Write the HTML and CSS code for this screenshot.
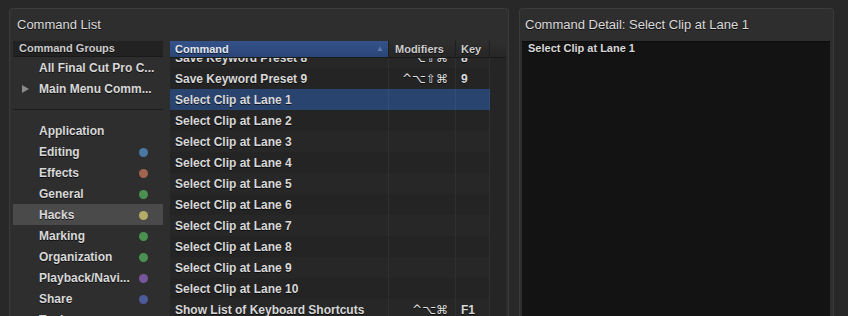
FILE: index.html
```html
<!DOCTYPE html>
<html>
  <head>
    <meta http-equiv="Content-Type" content="text/html; charset=utf-8"/>
    <link rel="stylesheet" href="styles.css">
  </head>
  <body>
    <div class="window">
      <div class="panel list-panel">
        <div class="panel-title">Command List</div>
        <div class="list-body">
          <div class="groups">
            <div class="groups-head">Command Groups</div>
            <div class="group top">All Final Cut Pro C...</div>
            <div class="group top"><span class="disclosure"></span>Main Menu Comm...</div>
            <div class="group-sep"></div>
            <div class="group">Application</div>
            <div class="group">Editing<span class="dot blue"></span></div>
            <div class="group">Effects<span class="dot rust"></span></div>
            <div class="group">General<span class="dot green"></span></div>
            <div class="group selected">Hacks<span class="dot yellow"></span></div>
            <div class="group">Marking<span class="dot green"></span></div>
            <div class="group">Organization<span class="dot green"></span></div>
            <div class="group">Playback/Navi...<span class="dot purple"></span></div>
            <div class="group">Share<span class="dot indigo"></span></div>
            <div class="group">Tools<span class="dot olive"></span></div>
          </div>
          <div class="commands">
            <div class="table-head">
              <div class="th col-cmd sorted">Command<span class="sort-arrow">&#9650;</span></div>
              <div class="th col-mod">Modifiers</div>
              <div class="th col-key">Key</div>
              <div class="th col-bar"></div>
            </div>
            <div class="table-body">
              <div class="rows">
                <div class="row"><div class="col-cmd">Save Keyword Preset 8</div><div class="col-mod keys">^&#8997;&#8679;&#8984;</div><div class="col-key">8</div></div>
                <div class="row"><div class="col-cmd">Save Keyword Preset 9</div><div class="col-mod keys">^&#8997;&#8679;&#8984;</div><div class="col-key">9</div></div>
                <div class="row selected"><div class="col-cmd">Select Clip at Lane 1</div><div class="col-mod"></div><div class="col-key"></div></div>
                <div class="row"><div class="col-cmd">Select Clip at Lane 2</div><div class="col-mod"></div><div class="col-key"></div></div>
                <div class="row"><div class="col-cmd">Select Clip at Lane 3</div><div class="col-mod"></div><div class="col-key"></div></div>
                <div class="row"><div class="col-cmd">Select Clip at Lane 4</div><div class="col-mod"></div><div class="col-key"></div></div>
                <div class="row"><div class="col-cmd">Select Clip at Lane 5</div><div class="col-mod"></div><div class="col-key"></div></div>
                <div class="row"><div class="col-cmd">Select Clip at Lane 6</div><div class="col-mod"></div><div class="col-key"></div></div>
                <div class="row"><div class="col-cmd">Select Clip at Lane 7</div><div class="col-mod"></div><div class="col-key"></div></div>
                <div class="row"><div class="col-cmd">Select Clip at Lane 8</div><div class="col-mod"></div><div class="col-key"></div></div>
                <div class="row"><div class="col-cmd">Select Clip at Lane 9</div><div class="col-mod"></div><div class="col-key"></div></div>
                <div class="row"><div class="col-cmd">Select Clip at Lane 10</div><div class="col-mod"></div><div class="col-key"></div></div>
                <div class="row"><div class="col-cmd">Show List of Keyboard Shortcuts</div><div class="col-mod keys">^&#8997;&#8984;</div><div class="col-key">F1</div></div>
              </div>
            </div>
          </div>
        </div>
      </div>
      <div class="panel detail-panel">
        <div class="panel-title">Command Detail: Select Clip at Lane 1</div>
        <div class="detail-text">Select Clip at Lane 1</div>
      </div>
    </div>
  </body>
</html>
```

FILE: styles.css
```css
html, body {
  margin: 0px;
  padding: 0px;
  height: 316px;
  overflow: hidden;
  background: #282828;
}

body {
  font-family: "Liberation Sans", Arial, sans-serif;
  color: #d8d8d8;
  text-shadow: 0px 1px 0px rgba(0, 0, 0, 0.7);
}

.window {
  display: flex;
  gap: 10px;
  padding: 8px 0px 0px 9px;
}

.panel {
  height: 340px;
  background: #2e2e2e;
  border: 1px solid #3b3b3b;
  border-bottom: none;
  border-radius: 4px 4px 0px 0px;
  display: flex;
  flex-direction: column;
}

.list-panel {
  width: 498px;
}

.detail-panel {
  width: 313px;
}

.panel-title {
  height: 32px;
  line-height: 32px;
  padding-left: 7px;
  font-size: 13px;
  color: #dadada;
  flex: none;
  white-space: nowrap;
}

.detail-panel .panel-title {
  padding-left: 5px;
}

/* command list */

.list-body {
  display: flex;
  gap: 7px;
  padding: 0px 2px 0px 3px;
  flex: 1;
}

.groups {
  width: 150px;
  flex: none;
}

.groups-head {
  height: 15px;
  line-height: 15px;
  background: #222222;
  border-bottom: 1px solid #1a1a1a;
  padding-left: 6px;
  font-size: 11px;
  font-weight: bold;
  color: #cccccc;
  white-space: nowrap;
}

.group {
  height: 21px;
  box-sizing: border-box;
  padding: 2px 15px 0px 26px;
  line-height: 19px;
  font-size: 12px;
  font-weight: bold;
  color: #d8d8d8;
  display: flex;
  justify-content: space-between;
  align-items: center;
  white-space: nowrap;
}

.group.top:first-of-type {
  margin-top: 1px;
}

.group.selected {
  background: #4a4a4a;
}

.disclosure {
  position: relative;
}

.disclosure::before {
  content: "";
  position: absolute;
  left: -17px;
  top: -5px;
  border-left: 7px solid #8a8a8a;
  border-top: 4px solid transparent;
  border-bottom: 4px solid transparent;
}

.group-sep {
  height: 1px;
  margin: 10px 0px 10px 0px;
  background: #1c1c1c;
}

.dot {
  width: 9px;
  height: 9px;
  border-radius: 50%;
  flex: none;
}

.dot.blue { background: #4a78a4; }
.dot.rust { background: #a0644f; }
.dot.green { background: #4a9050; }
.dot.yellow { background: #b4ac66; }
.dot.purple { background: #76579c; }
.dot.indigo { background: #4d5a9c; }
.dot.olive { background: #9a9458; }

/* command table */

.commands {
  width: 336px;
  flex: none;
  display: flex;
  flex-direction: column;
  background: #252525;
}

.table-head {
  display: flex;
  height: 16px;
  background: linear-gradient(#2f2f2f, #262626);
  border-bottom: 1px solid #1a1a1a;
  flex: none;
  position: relative;
  z-index: 1;
}

.th {
  line-height: 16px;
  font-size: 11px;
  font-weight: bold;
  color: #cccccc;
  border-right: 1px solid #1e1e1e;
  box-sizing: border-box;
  white-space: nowrap;
}

.th.sorted {
  background: linear-gradient(#34528a, #2a4677);
  color: #e4e8f0;
  display: flex;
  justify-content: space-between;
}

.sort-arrow {
  font-size: 8px;
  color: #5a78ae;
  padding-right: 4px;
  text-shadow: none;
}

.col-cmd {
  width: 219px;
  padding-left: 5px;
  box-sizing: border-box;
}

.col-mod {
  width: 67px;
  padding-left: 6px;
  box-sizing: border-box;
}

.col-key {
  width: 34px;
  padding-left: 5px;
  box-sizing: border-box;
}

.col-bar {
  width: 16px;
  border-right: none;
}

.table-body {
  flex: 1;
  overflow: hidden;
}

.rows {
  margin-top: -11px;
  width: 320px;
}

.row {
  display: flex;
  height: 21px;
  line-height: 22px;
  font-size: 12px;
  font-weight: bold;
  color: #d8d8d8;
}

.row:nth-child(odd) {
  background: #272727;
}

.row:nth-child(even) {
  background: #242424;
}

.row > div {
  border-right: 1px solid #303030;
  white-space: nowrap;
}

.row .col-mod {
  text-align: right;
  padding-right: 7px;
}

.row .keys {
  font-family: "DejaVu Sans", sans-serif;
  font-weight: normal;
  font-size: 12px;
  color: #e0e0e0;
}

.row.selected {
  background: #2a4470;
}

.row.selected > div {
  border-right-color: #304c78;
}

/* command detail */

.detail-text {
  flex: 1;
  margin: 0px 3px 0px 2px;
  background: #131313;
  border-top: 1px solid #0c0c0c;
  padding: 0px 6px;
  font-size: 11px;
  font-weight: bold;
  line-height: 13px;
  color: #d8d8d8;
}
```
